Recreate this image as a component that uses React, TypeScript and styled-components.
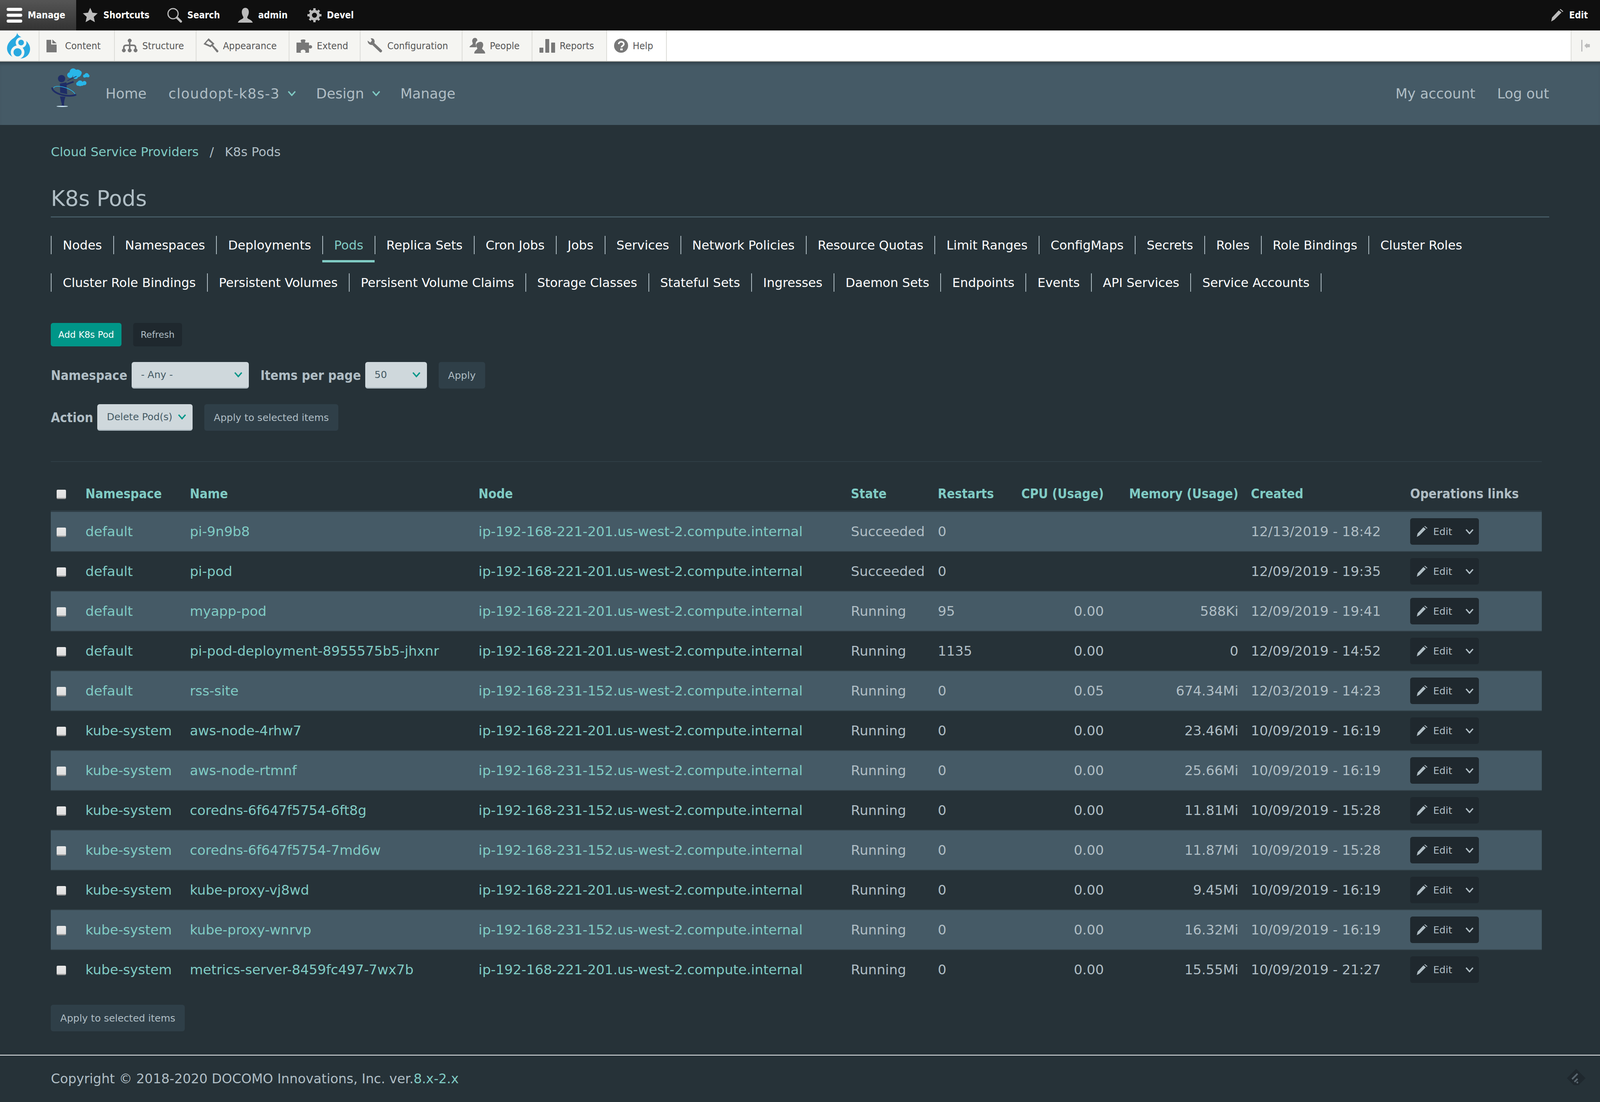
import { FC, ReactNode } from "react";
import styled, { createGlobalStyle } from "styled-components";

const FONT = `"DejaVu Sans", "Liberation Sans", sans-serif`;
const NARROW = `"DejaVu Sans Condensed", "DejaVu Sans", "Liberation Sans", sans-serif`;

// The brief says a 4400px window, but the browser reports innerWidth 4096 (height 2822 is as stated).
// So horizontal sizes are percentages of the 4400px reference, and text sizes are picked to fit 4096:
// the page comes out narrower than the reference by 4096/4400, not cut off at the right edge.
const pct = (n: number, base = 4400) => `${((n / base) * 100).toFixed(4)}%`;

const GlobalStyle = createGlobalStyle`
  html, body {
    margin: 0;
    padding: 0;
    background: #263238;
  }
  body {
    font-family: ${FONT};
    color: #b0bec5;
  }
  * {
    box-sizing: border-box;
  }
`;

const pods = [
  ["default", "pi-9n9b8", "ip-192-168-221-201.us-west-2.compute.internal", "Succeeded", "0", "", "", "12/13/2019 - 18:42"],
  ["default", "pi-pod", "ip-192-168-221-201.us-west-2.compute.internal", "Succeeded", "0", "", "", "12/09/2019 - 19:35"],
  ["default", "myapp-pod", "ip-192-168-221-201.us-west-2.compute.internal", "Running", "95", "0.00", "588Ki", "12/09/2019 - 19:41"],
  ["default", "pi-pod-deployment-8955575b5-jhxnr", "ip-192-168-221-201.us-west-2.compute.internal", "Running", "1135", "0.00", "0", "12/09/2019 - 14:52"],
  ["default", "rss-site", "ip-192-168-231-152.us-west-2.compute.internal", "Running", "0", "0.05", "674.34Mi", "12/03/2019 - 14:23"],
  ["kube-system", "aws-node-4rhw7", "ip-192-168-221-201.us-west-2.compute.internal", "Running", "0", "0.00", "23.46Mi", "10/09/2019 - 16:19"],
  ["kube-system", "aws-node-rtmnf", "ip-192-168-231-152.us-west-2.compute.internal", "Running", "0", "0.00", "25.66Mi", "10/09/2019 - 16:19"],
  ["kube-system", "coredns-6f647f5754-6ft8g", "ip-192-168-231-152.us-west-2.compute.internal", "Running", "0", "0.00", "11.81Mi", "10/09/2019 - 15:28"],
  ["kube-system", "coredns-6f647f5754-7md6w", "ip-192-168-231-152.us-west-2.compute.internal", "Running", "0", "0.00", "11.87Mi", "10/09/2019 - 15:28"],
  ["kube-system", "kube-proxy-vj8wd", "ip-192-168-221-201.us-west-2.compute.internal", "Running", "0", "0.00", "9.45Mi", "10/09/2019 - 16:19"],
  ["kube-system", "kube-proxy-wnrvp", "ip-192-168-231-152.us-west-2.compute.internal", "Running", "0", "0.00", "16.32Mi", "10/09/2019 - 16:19"],
  ["kube-system", "metrics-server-8459fc497-7wx7b", "ip-192-168-221-201.us-west-2.compute.internal", "Running", "0", "0.00", "15.55Mi", "10/09/2019 - 21:27"],
];

const tabRows = [
  ["Nodes", "Namespaces", "Deployments", "Pods", "Replica Sets", "Cron Jobs", "Jobs", "Services", "Network Policies", "Resource Quotas", "Limit Ranges", "ConfigMaps", "Secrets", "Roles", "Role Bindings", "Cluster Roles"],
  ["Cluster Role Bindings", "Persistent Volumes", "Persisent Volume Claims", "Storage Classes", "Stateful Sets", "Ingresses", "Daemon Sets", "Endpoints", "Events", "API Services", "Service Accounts"],
];

const Chevron: FC<{ size: number; color: string }> = ({ size, color }) => (
  <svg width={size} height={size * 0.65} viewBox="0 0 20 13" fill="none">
    <path d="M2 2l8 9 8-9" stroke={color} strokeWidth="3.2" />
  </svg>
);

const Bars = () => (
  <svg width="40" height="38" viewBox="0 0 40 38" fill="#fff">
    <rect y="0" width="40" height="8" rx="4" />
    <rect y="15" width="40" height="8" rx="4" />
    <rect y="30" width="40" height="8" rx="4" />
  </svg>
);
const StarIcon = () => (
  <svg width="38" height="38" viewBox="0 0 38 38" fill="#bbb">
    <path d="M19 0l5.6 12.6 13.4 1.4-10 9.2 2.9 13.6L19 30l-11.900 6.800 2.900-13.600-10-9.200 13.400-1.400z" />
  </svg>
);
const SearchIcon = () => (
  <svg width="38" height="38" viewBox="0 0 38 38" fill="none" stroke="#bbb">
    <circle cx="15" cy="15" r="13" strokeWidth="3" />
    <path d="M25 25l10 10" strokeWidth="6" strokeLinecap="round" />
  </svg>
);
const UserIcon = () => (
  <svg width="38" height="38" viewBox="0 0 38 38" fill="#bbb">
    <path d="M19 0c6 0 9 5 9 11 0 6-3 10-4 13-.5 2 1 3.500 4 5 5 2 9 5 10 9H0c1-4 5-7 10-9 3-1.500 4.500-3 4-5-1-3-4-7-4-13C10 5 13 0 19 0z" />
  </svg>
);
const GearIcon = () => (
  <svg width="36" height="36" viewBox="0 0 36 36" fill="none" stroke="#bbb">
    <circle cx="18" cy="18" r="10" strokeWidth="7" />
    <path d="M18 0v6M18 30v6M0 18h6M30 18h6M5.500 5.500l4 4M26.500 26.500l4 4M5.500 30.500l4-4M26.500 9.500l4-4" strokeWidth="6" />
  </svg>
);
const PencilIcon: FC<{ size: number; color: string }> = ({ size, color }) => (
  <svg width={size} height={size} viewBox="0 0 28 28" fill={color}>
    <path d="M0 28l2-9L17 3l6 5L7 24z" />
    <path d="M19 1l2-1 6 5-1 2z" />
  </svg>
);

const DocIcon = () => (
  <svg width="26" height="33" viewBox="0 0 26 33" fill="#787878">
    <path d="M0 1h12v12h14v20H0z" />
    <path d="M15 0l11 10H15z" />
  </svg>
);
const TreeIcon = () => (
  <svg width="40" height="36" viewBox="0 0 40 36" fill="#787878" stroke="#787878">
    <circle cx="20" cy="5" r="4.500" />
    <circle cx="5" cy="30" r="4.500" />
    <circle cx="20" cy="30" r="4.500" />
    <circle cx="35" cy="30" r="4.500" />
    <path d="M20 5v25M5 30v-7c0-4 2-6 6-6h18c4 0 6 2 6 6v7" strokeWidth="4" fill="none" />
  </svg>
);
const BrushIcon = () => (
  <svg width="38" height="38" viewBox="0 0 38 38" fill="#787878">
    <path d="M13 0l15 14-10 9L0 15zM12 6l-6 7 11 5 5-4z" fillRule="evenodd" />
    <path d="M21 20l3-3 14 15c1 2-2 5-4 4z" />
  </svg>
);
const PuzzleIcon = () => (
  <svg width="40" height="35" viewBox="0 0 40 35" fill="#787878">
    <path d="M0 9h12c1-2-2-3-1-6 0-2 12-3 12 0 0 3-2 4-1 6h10v8c2-2 8-2 8 3s-6 5-8 3v12H22c1-2 2-3 0-6-2-3-10-2-11 1-1 2 0 3 1 5H0z" />
  </svg>
);
const WrenchIcon = () => (
  <svg width="38" height="38" viewBox="0 0 38 38" fill="#787878">
    <path d="M8 0c6-1 10 3 10 8 0 2 0 3-1 4l20 19c1 3-2 6-5 5L12 17c-5 1-12-3-12-11l7 5 4-5z" />
  </svg>
);
const PeopleIcon = () => (
  <svg width="40" height="40" viewBox="0 0 40 40" fill="#787878">
    <path d="M14 0c4 0 6 3 6 7-3 2-5 5-4 10 1 4 2 5 1 7H0c0-3 4-5 7-7 2-2 1-4 0-7-1-5 2-10 7-10z" />
    <path d="M28 10c5 0 7 4 7 8 0 4-2 6-3 9 0 3 8 5 8 13H12c0-8 8-10 8-13-1-3-3-5-3-9 0-4 6-8 11-8z" />
  </svg>
);
const ChartIcon = () => (
  <svg width="40" height="35" viewBox="0 0 40 35" fill="#787878">
    <rect x="0" y="22" width="10" height="13" rx="1" />
    <rect x="15" y="0" width="10" height="35" rx="1" />
    <rect x="30" y="9" width="10" height="26" rx="1" />
  </svg>
);
const HelpIcon = () => (
  <svg width="36" height="36" viewBox="0 0 36 36">
    <circle cx="18" cy="18" r="18" fill="#787878" />
    <path d="M12 14c0-4 3-6 6.500-6s6.500 2 6.500 5.500c0 5-6 4.500-6 9" stroke="#fff" strokeWidth="4" fill="none" />
    <rect x="16" y="25" width="6" height="5" fill="#fff" />
  </svg>
);
const CollapseIcon = () => (
  <svg width="22" height="30" viewBox="0 0 22 30" fill="#bbb">
    <rect x="0" y="0" width="3" height="30" />
    <path d="M8 15l7-7v3h7v8h-7v3z" />
  </svg>
);

const DrupalLogo = () => (
  <svg width="60" height="66" viewBox="0 0 60 66">
    <path d="M26 0c1 5 5 8 10 11 12 7 23 17 23 30 0 14-10 25-27 25C14 66 0 54 0 40 0 27 10 18 19 12c3-3 6-6 7-12z" fill="#29a9e0" />
    <circle cx="27" cy="50" r="14" fill="#29a9e0" stroke="#f5f5f2" strokeWidth="7" />
    <circle cx="36" cy="25" r="10.500" fill="#29a9e0" stroke="#f5f5f2" strokeWidth="6.500" />
  </svg>
);

const SiteLogo = () => (
  <svg width="100" height="100" viewBox="120 130 300 300">
    <g fill="#29b6e8">
      <circle cx="292" cy="160" r="27" />
      <circle cx="325" cy="172" r="30" />
      <circle cx="268" cy="185" r="22" />
      <circle cx="310" cy="195" r="20" />
      <circle cx="340" cy="168" r="18" />
      <circle cx="395" cy="185" r="16" />
      <circle cx="380" cy="192" r="12" />
      <circle cx="406" cy="191" r="11" />
      <circle cx="345" cy="248" r="22" />
      <circle cx="330" cy="252" r="15" />
      <circle cx="378" cy="246" r="16" />
      <circle cx="360" cy="252" r="15" />
    </g>
    <g fill="#1f2d66">
      <circle cx="203" cy="212" r="28" />
      <path d="M190 250l50-10 6 92-54-12z" />
      <path d="M190 348l42 4-8 30-3 32 8 12-32-3 9-12-8-30z" />
    </g>
    <path d="M235 258l60-22" stroke="#1f2d66" strokeWidth="13" />
    <path d="M248 228l70-34" stroke="#1f2d66" strokeWidth="5" />
    <path d="M130 280c0 50 130 80 185 55" fill="none" stroke="#1f2d66" strokeWidth="13" />
    <path d="M142 285c0-30 130-10 165 45" fill="none" stroke="#29b6e8" strokeWidth="5" />
    <ellipse cx="208" cy="425" rx="44" ry="5" fill="#cfe8f5" />
  </svg>
);

const FeedIcon = () => (
  <svg width="48" height="42" viewBox="0 0 48 42">
    <path d="M24 0l24 24-18 18H18L0 24z" fill="#1f282e" />
    <path d="M12 25L26 11l3 3-14 14zM18 32l8-8 3 3-8 8zM24 35l3-3 3 3-3 3z" fill="#5a6770" />
  </svg>
);

const TopBar = styled.div`
  display: flex;
  align-items: center;
  height: 78px;
  background: #0f0f0f;
`;
const TopItem = styled.a<{ $w?: number; $active?: boolean }>`
  display: flex;
  align-items: center;
  gap: 14px;
  flex: 0 0 auto;
  width: ${(p) => (p.$w ? pct(p.$w) : "auto")};
  height: 100%;
  padding: 0 ${(p) => (p.$w ? "0" : "31px")} 0 17px;
  font-family: ${NARROW};
  font-size: 24px;
  font-weight: 700;
  color: #fff;
  background: ${(p) => (p.$active ? "linear-gradient(#555, #333)" : "none")};
`;
const TopSpacer = styled.div`
  flex: 1;
`;
const Tray = styled.div`
  display: flex;
  height: 80px;
  background: #fff;
  border-bottom: 2px solid #b5b5b0;
`;
const TrayItem = styled.a<{ $w: number; $plain?: boolean; $iconGap?: number }>`
  display: flex;
  align-items: center;
  gap: ${(p) => p.$iconGap ?? 12}px;
  flex: 0 0 auto;
  width: ${(p) => pct(p.$w)};
  padding-left: 18px;
  font-family: ${NARROW};
  font-size: 25.5px;
  color: #565656;
  background: ${(p) => (p.$plain ? "#fff" : "#f5f5f2")};
  border-right: 2px solid #dcdcd8;
`;
const TrayFill = styled.div`
  flex: 1;
  background: #fff;
`;
const TrayToggle = styled.div`
  display: flex;
  align-items: center;
  justify-content: center;
  width: ${pct(81)};
  background: #f5f5f2;
  border-left: 2px solid #dcdcd8;
`;
const Header = styled.header`
  display: flex;
  align-items: center;
  height: 162px;
  padding: 0 ${pct(140)};
  background: #455a66;
  box-shadow: inset 0 10px 8px -6px rgba(0, 0, 0, 0.35);
`;
const LogoSlot = styled.div`
  height: 100px;
  margin: -30px 40px 0 0;
`;
const NavList = styled.nav<{ $right?: boolean }>`
  display: flex;
  align-items: center;
  gap: 56px;
  margin-left: ${(p) => (p.$right ? "auto" : 0)};
`;
const NavLink = styled.a<{ $spaced?: boolean; $caret?: boolean }>`
  display: flex;
  align-items: center;
  gap: 20px;
  margin-right: ${(p) => (p.$caret ? "-5px" : 0)};
  font-size: 35.5px;
  letter-spacing: ${(p) => (p.$spaced ? "1.5px" : "normal")};
  color: #b0bec5;
  white-space: nowrap;
`;
const Main = styled.main`
  padding: 44px ${pct(140)} 0;
`;
const Crumbs = styled.div`
  display: flex;
  align-items: center;
  height: 50px;
  font-size: 32px;
`;
const CrumbSep = styled.span`
  margin: 0 28px;
`;
const TealLink = styled.a`
  color: #80cbc4;
`;
const Title = styled.h1`
  display: flex;
  align-items: center;
  height: 95px;
  margin: 48px 0 0;
  font-size: 55px;
  font-weight: 400;
  color: #b0bec5;
  border-bottom: 3px solid #455a64;
`;
const TabRows = styled.div`
  display: flex;
  flex-direction: column;
  gap: 49px;
  margin-top: 47px;
`;
const TabRow = styled.ul`
  display: flex;
  margin: 0;
  padding: 0;
  list-style: none;
`;
const Tab = styled.li<{ $active?: boolean; $last?: boolean }>`
  position: relative;
  display: flex;
  align-items: center;
  height: 47px;
  padding: 0 28.5px;
  font-size: 32px;
  color: ${(p) => (p.$active ? "#80cbc4" : "#fff")};
  white-space: nowrap;
  border-left: 2px solid #b0bec5;
  border-right: ${(p) => (p.$last ? "2px solid #b0bec5" : "0")};

  ${(p) =>
    p.$active
      ? `&::after {
    content: "";
    position: absolute;
    left: -2px;
    right: 0;
    bottom: -21px;
    height: 6px;
    background: #80cbc4;
  }`
      : ""}
`;
const ButtonRow = styled.div`
  display: flex;
  gap: 30px;
  margin-top: 80px;
`;
const Button = styled.a<{ $tone: "primary" | "dark" | "slate"; $small?: boolean }>`
  display: inline-flex;
  align-items: center;
  height: ${(p) => (p.$small ? 60 : 68)}px;
  padding: 0 ${(p) => (p.$small ? 19 : 24)}px;
  border-radius: 6px;
  font-size: ${(p) => (p.$small ? 23 : 25)}px;
  white-space: nowrap;
  color: ${(p) => (p.$tone === "primary" ? "#fff" : "#b0bec5")};
  background: ${(p) =>
    p.$tone === "primary" ? "#009688" : p.$tone === "dark" ? "#1f282e" : "#2f3f48"};
`;
const FilterRow = styled.div`
  display: flex;
  align-items: center;
  margin-top: 40px;
`;
const FieldLabel = styled.label`
  margin-right: 11px;
  font-family: ${NARROW};
  font-size: 33.5px;
  font-weight: 700;
  color: #b0bec5;
  white-space: nowrap;
`;
const Select = styled.div<{ $w: number }>`
  display: flex;
  align-items: center;
  justify-content: space-between;
  width: ${(p) => pct(p.$w, 4120)};
  height: 68px;
  margin-right: 30px;
  padding: 0 16px 0 24px;
  border-radius: 6px;
  border-bottom: 3px solid #aebbc2;
  background: #cfd8dc;
  color: #455a64;
  font-size: 25px;
  white-space: nowrap;
`;
const TableWrap = styled.div`
  width: ${pct(4100, 4120)};
  margin-top: 78px;
  border-top: 2px solid #2f3e46;
`;
const Table = styled.table`
  width: 100%;
  table-layout: fixed;
  border-collapse: separate;
  border-spacing: 0;
`;
const Col = styled.col<{ $w: number }>`
  width: ${(p) => pct(p.$w, 4100)};
`;
const Th = styled.th<{ $plain?: boolean; $right?: boolean }>`
  height: 128px;
  padding: 38px ${(p) => (p.$right ? "32px" : "0")} 0 0;
  font-family: ${NARROW};
  font-size: 33.5px;
  font-weight: 700;
  text-align: ${(p) => (p.$right ? "right" : "left")};
  color: ${(p) => (p.$plain ? "#b0bec5" : "#80cbc4")};
  white-space: nowrap;
  border-bottom: 4px solid #2f3e46;
`;
const Td = styled.td<{ $right?: boolean }>`
  height: 102px;
  padding: 0 ${(p) => (p.$right ? "32px" : "0")} 0 0;
  font-size: 34.5px;
  text-align: ${(p) => (p.$right ? "right" : "left")};
  white-space: nowrap;
  border-bottom: 2px solid #37474f;
`;
const Tr = styled.tr<{ $odd: boolean }>`
  background: ${(p) => (p.$odd ? "#455a66" : "transparent")};

  &:last-child ${Td} {
    border-bottom-color: transparent;
  }
`;
const CheckCell = styled.div`
  display: flex;
  padding: 4px 0 0 15px;
`;
const Check = styled.input`
  appearance: none;
  display: block;
  width: 24px;
  height: 24px;
  margin: 0;
  border-radius: 3px;
  background: linear-gradient(#e8e8e8, #dedede);
  border-bottom: 3px solid #9a9a9a;
`;
const EditButton = styled.a`
  display: flex;
  align-items: center;
  width: ${pct(189, 362)};
  height: 68px;
  padding: 0 13px 0 17px;
  border-radius: 6px;
  background: #1f282e;
  color: #b0bec5;
  font-size: 25px;
`;
const EditLabel = styled.span`
  flex: 1;
  margin-left: 14px;
`;
const BulkRow = styled.div`
  margin-top: 38px;
`;
const Footer = styled.footer`
  display: flex;
  align-items: center;
  height: 120px;
  margin-top: 60px;
  padding: 0 ${pct(140)};
  border-top: 2px solid #eceff1;
  font-size: 33.5px;
  white-space: nowrap;
`;
const FeedBadge = styled.div`
  position: absolute;
  right: ${pct(40)};
  top: 2737px;
`;
const Page = styled.div`
  position: relative;
  width: 100%;
  height: 2822px;
  overflow: hidden;
`;

const Caret: FC<{ children: ReactNode; $spaced?: boolean }> = ({ children, $spaced }) => (
  <NavLink $spaced={$spaced} $caret>
    {children}
    <Chevron size={22} color="#80cbc4" />
  </NavLink>
);

const App: FC = () => {
  return (
    <Page>
      <GlobalStyle />
      <TopBar>
        <TopItem $w={210} $active>
          <Bars />
          Manage
        </TopItem>
        <TopItem $w={231}>
          <StarIcon />
          Shortcuts
        </TopItem>
        <TopItem $w={195}>
          <SearchIcon />
          Search
        </TopItem>
        <TopItem $w={191}>
          <UserIcon />
          admin
        </TopItem>
        <TopItem $w={200}>
          <GearIcon />
          Devel
        </TopItem>
        <TopSpacer />
        <TopItem>
          <PencilIcon size={32} color="#bbb" />
          Edit
        </TopItem>
      </TopBar>
      <Tray>
        <TrayItem $w={108}>
          <DrupalLogo />
        </TrayItem>
        <TrayItem $w={208} $iconGap={22}>
          <DocIcon />
          Content
        </TrayItem>
        <TrayItem $w={224}>
          <TreeIcon />
          Structure
        </TrayItem>
        <TrayItem $w={256}>
          <BrushIcon />
          Appearance
        </TrayItem>
        <TrayItem $w={196}>
          <PuzzleIcon />
          Extend
        </TrayItem>
        <TrayItem $w={280}>
          <WrenchIcon />
          Configuration
        </TrayItem>
        <TrayItem $w={192}>
          <PeopleIcon />
          People
        </TrayItem>
        <TrayItem $w={205}>
          <ChartIcon />
          Reports
        </TrayItem>
        <TrayItem $w={165} $plain>
          <HelpIcon />
          Help
        </TrayItem>
        <TrayFill />
        <TrayToggle>
          <CollapseIcon />
        </TrayToggle>
      </Tray>
      <Header>
        <LogoSlot>
          <SiteLogo />
        </LogoSlot>
        <NavList>
          <NavLink>Home</NavLink>
          <Caret $spaced>cloudopt-k8s-3</Caret>
          <Caret>Design</Caret>
          <NavLink>Manage</NavLink>
        </NavList>
        <NavList $right>
          <NavLink>My account</NavLink>
          <NavLink>Log out</NavLink>
        </NavList>
      </Header>
      <Main>
        <Crumbs>
          <TealLink>Cloud Service Providers</TealLink>
          <CrumbSep>/</CrumbSep>
          K8s Pods
        </Crumbs>
        <Title>K8s Pods</Title>
        <TabRows>
          {tabRows.map((row, r) => (
            <TabRow key={r}>
              {row.map((tab, i) => (
                <Tab key={tab} $active={tab === "Pods"} $last={r === 1 && i === row.length - 1}>
                  {tab}
                </Tab>
              ))}
            </TabRow>
          ))}
        </TabRows>
        <ButtonRow>
          <Button $tone="primary" $small>
            Add K8s Pod
          </Button>
          <Button $tone="dark" $small>
            Refresh
          </Button>
        </ButtonRow>
        <FilterRow>
          <FieldLabel>Namespace</FieldLabel>
          <Select $w={322}>
            - Any -
            <Chevron size={22} color="#009688" />
          </Select>
          <FieldLabel>Items per page</FieldLabel>
          <Select $w={170}>
            50
            <Chevron size={22} color="#009688" />
          </Select>
          <Button $tone="slate">Apply</Button>
        </FilterRow>
        <FilterRow>
          <FieldLabel>Action</FieldLabel>
          <Select $w={262}>
            Delete Pod(s)
            <Chevron size={22} color="#009688" />
          </Select>
          <Button $tone="slate">Apply to selected items</Button>
        </FilterRow>
        <TableWrap>
          <Table>
            <colgroup>
              <Col $w={95} />
              <Col $w={287} />
              <Col $w={794} />
              <Col $w={1024} />
              <Col $w={239} />
              <Col $w={201} />
              <Col $w={290} />
              <Col $w={370} />
              <Col $w={438} />
              <Col $w={362} />
            </colgroup>
            <thead>
              <tr>
                <Th>
                  <CheckCell>
                    <Check type="checkbox" />
                  </CheckCell>
                </Th>
                <Th>Namespace</Th>
                <Th>Name</Th>
                <Th>Node</Th>
                <Th>State</Th>
                <Th>Restarts</Th>
                <Th $right>CPU (Usage)</Th>
                <Th $right>Memory (Usage)</Th>
                <Th>Created</Th>
                <Th $plain>Operations links</Th>
              </tr>
            </thead>
            <tbody>
              {pods.map((pod, i) => (
                <Tr key={pod[1]} $odd={i % 2 === 0}>
                  <Td>
                    <CheckCell>
                      <Check type="checkbox" />
                    </CheckCell>
                  </Td>
                  <Td>
                    <TealLink>{pod[0]}</TealLink>
                  </Td>
                  <Td>
                    <TealLink>{pod[1]}</TealLink>
                  </Td>
                  <Td>
                    <TealLink>{pod[2]}</TealLink>
                  </Td>
                  <Td>{pod[3]}</Td>
                  <Td>{pod[4]}</Td>
                  <Td $right>{pod[5]}</Td>
                  <Td $right>{pod[6]}</Td>
                  <Td>{pod[7]}</Td>
                  <Td>
                    <EditButton>
                      <PencilIcon size={28} color="#b0bec5" />
                      <EditLabel>Edit</EditLabel>
                      <Chevron size={22} color="#b0bec5" />
                    </EditButton>
                  </Td>
                </Tr>
              ))}
            </tbody>
          </Table>
        </TableWrap>
        <BulkRow>
          <Button $tone="slate">Apply to selected items</Button>
        </BulkRow>
      </Main>
      <Footer>
        Copyright © 2018-2020 DOCOMO Innovations, Inc. ver.<TealLink>8.x-2.x</TealLink>
      </Footer>
      <FeedBadge>
        <FeedIcon />
      </FeedBadge>
    </Page>
  );
};

export default App;
